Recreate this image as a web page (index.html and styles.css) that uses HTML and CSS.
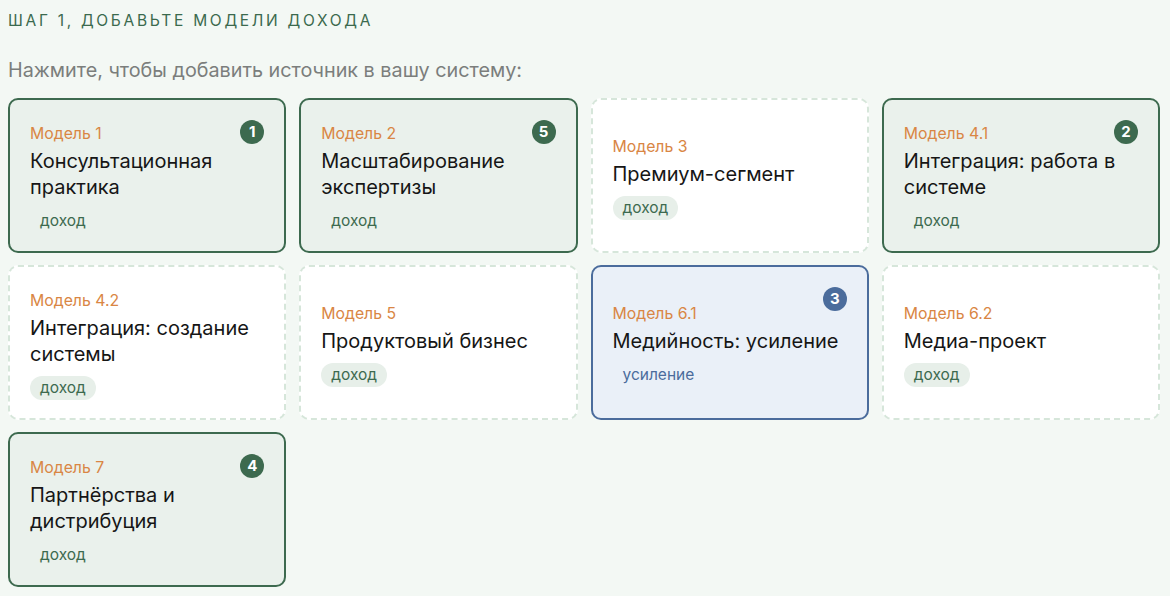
FILE: index.html
```html
<!DOCTYPE html>
<html lang="ru">
<head>
    <meta charset="UTF-8">
    <meta name="viewport" content="width=device-width, initial-scale=1.0">
    <title>Шаг 1</title>
    <link rel="stylesheet" href="styles.css">
</head>
<body>
  <div class="step">
    <h2 class="step-title">Шаг 1, добавьте модели дохода</h2>
    <p class="step-hint">Нажмите, чтобы добавить источник в вашу систему:</p>
    <div class="models">
        <div class="model picked">
            <span class="badge">1</span>
            <div class="model-num">Модель 1</div>
            <div class="model-name">Консультационная практика</div>
            <span class="tag">доход</span>
        </div>
        <div class="model picked">
            <span class="badge">5</span>
            <div class="model-num">Модель 2</div>
            <div class="model-name">Масштабирование экспертизы</div>
            <span class="tag">доход</span>
        </div>
        <div class="model">
            <div class="model-num">Модель 3</div>
            <div class="model-name">Премиум-сегмент</div>
            <span class="tag">доход</span>
        </div>
        <div class="model picked">
            <span class="badge">2</span>
            <div class="model-num">Модель 4.1</div>
            <div class="model-name">Интеграция: работа в системе</div>
            <span class="tag">доход</span>
        </div>
        <div class="model">
            <div class="model-num">Модель 4.2</div>
            <div class="model-name">Интеграция: создание системы</div>
            <span class="tag">доход</span>
        </div>
        <div class="model">
            <div class="model-num">Модель 5</div>
            <div class="model-name">Продуктовый бизнес</div>
            <span class="tag">доход</span>
        </div>
        <div class="model picked boost">
            <span class="badge">3</span>
            <div class="model-num">Модель 6.1</div>
            <div class="model-name">Медийность: усиление</div>
            <span class="tag">усиление</span>
        </div>
        <div class="model">
            <div class="model-num">Модель 6.2</div>
            <div class="model-name">Медиа-проект</div>
            <span class="tag">доход</span>
        </div>
        <div class="model picked">
            <span class="badge">4</span>
            <div class="model-num">Модель 7</div>
            <div class="model-name">Партнёрства и дистрибуция</div>
            <span class="tag">доход</span>
        </div>
    </div>
  </div>
</body>
</html>
```

FILE: styles.css
```css
body {
    font-family: Inter, "Liberation Sans", sans-serif;
    background-color: #f3f8f4;
    margin: 0;
    padding: 8px;
    color: #1a1a1a;
}
.step-title {
    margin: 3px 0 0;
    font-size: 15.5px;
    font-weight: normal;
    text-transform: uppercase;
    letter-spacing: 2.7px;
    color: #3b6a4e;
    line-height: 20px;
}
.step-hint {
    margin: 28px 0 17px;
    font-size: 19.8px;
    color: #7b7e7c;
    line-height: 22px;
}
.models {
    display: grid;
    grid-template-columns: repeat(4, 1fr);
    grid-auto-rows: 155px;
    gap: 12px 13px;
    width: 1152px;
}
.model {
    position: relative;
    display: flex;
    flex-direction: column;
    justify-content: center;
    align-items: flex-start;
    padding: 6px 20px 0;
    background-color: #fff;
    border: 2px dashed #d6e6da;
    border-radius: 10px;
    cursor: pointer;
}
.model.picked {
    background-color: #eaf1ec;
    border: 2px solid #3d6a4f;
}
.model.boost {
    background-color: #eaf0f8;
    border-color: #4b6c9c;
}
.model-num {
    font-size: 15.8px;
    line-height: 20px;
    color: #d98644;
}
.model-name {
    margin-top: 4px;
    font-size: 20px;
    line-height: 26px;
    color: #161616;
}
.tag {
    margin-top: 9px;
    padding: 2px 10px;
    font-size: 15.5px;
    line-height: 20px;
    border-radius: 12px;
    background-color: #e7efe9;
    color: #3d6a4f;
}
.picked .tag {
    background-color: transparent;
}
.boost .tag {
    color: #4b6c9c;
}
.badge {
    position: absolute;
    top: 20px;
    right: 20px;
    width: 24px;
    height: 24px;
    border-radius: 50%;
    background-color: #3d6a4f;
    color: #fff;
    font-size: 15px;
    font-weight: bold;
    line-height: 24px;
    text-align: center;
}
.boost .badge {
    background-color: #4b6c9c;
}
```
